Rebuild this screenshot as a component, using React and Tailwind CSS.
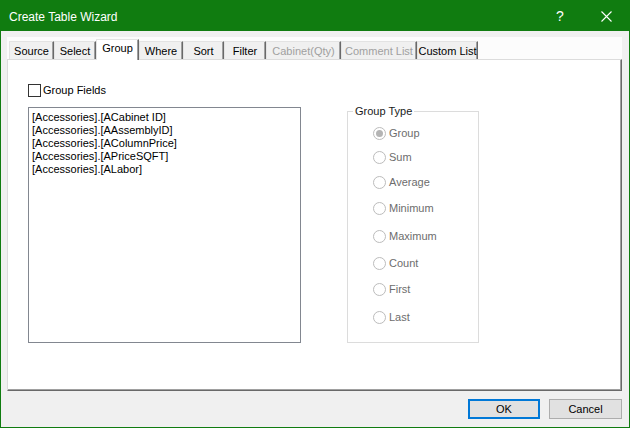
import React from "react";

const tabs = [
  { label: "Source", w: "w-[45px]" },
  { label: "Select", w: "w-[42px]" },
  { label: "Group", w: "w-[43px]", active: true },
  { label: "Where", w: "w-[44px]" },
  { label: "Sort", w: "w-[41px]" },
  { label: "Filter", w: "w-[42px]" },
  { label: "Cabinet(Qty)", w: "w-[75px]", disabled: true },
  { label: "Comment List", w: "w-[76px]", disabled: true },
  { label: "Custom List", w: "w-[61px]" },
];

const fields = [
  "[Accessories].[ACabinet ID]",
  "[Accessories].[AAssemblyID]",
  "[Accessories].[AColumnPrice]",
  "[Accessories].[APriceSQFT]",
  "[Accessories].[ALabor]",
];

const radios = [
  { label: "Group", mt: "mt-[15px]", checked: true },
  { label: "Sum", mt: "mt-[11px]" },
  { label: "Average", mt: "mt-[12px]" },
  { label: "Minimum", mt: "mt-[13px]" },
  { label: "Maximum", mt: "mt-[15px]" },
  { label: "Count", mt: "mt-[14px]" },
  { label: "First", mt: "mt-[13px]" },
  { label: "Last", mt: "mt-[15px]" },
];

function Tab({ t }) {
  if (t.active) {
    return (
      <div
        className={`${t.w} h-[21px] -mb-px relative z-10 bg-white border-t border-l border-[#e3e3e3] border-r border-r-[#696969] shadow-[inset_-1px_0_0_#a0a0a0] flex items-start justify-center pt-[2px] text-black`}
      >
        {t.label}
      </div>
    );
  }
  return (
    <div
      className={`${t.w} h-[18px] bg-[#f0f0f0] border-t border-l border-[#e3e3e3] border-r border-r-[#696969] shadow-[inset_-1px_0_0_#a0a0a0] flex items-center justify-center pt-px ${
        t.disabled ? "text-[#a0a0a0]" : "text-black"
      }`}
    >
      {t.label}
    </div>
  );
}

export default function App() {
  return (
    <div
      className="w-[630px] h-[428px] border border-[#107c10] bg-[#f0f0f0] flex flex-col text-[11px] leading-[13px] overflow-hidden"
      style={{ fontFamily: '"Liberation Sans", Arial, sans-serif' }}
    >
      {/* Title bar */}
      <div className="h-[30px] shrink-0 bg-[#107c10] flex items-center text-white">
        <div className="pl-[8px] text-[12px] leading-[14px] pt-px">Create Table Wizard</div>
        <div className="ml-auto flex h-full">
          <div className="w-[46px] h-full flex items-center justify-center text-[14px] pt-px">?</div>
          <div className="w-[46px] h-full flex items-center justify-center">
            <svg width="11" height="11" viewBox="0 0 11 11">
              <path d="M0.5 0.5 L10.5 10.5 M10.5 0.5 L0.5 10.5" stroke="white" strokeWidth="1.1" fill="none" />
            </svg>
          </div>
        </div>
      </div>

      {/* Body */}
      <div className="flex-1 flex flex-col pl-[6px] pr-[6px] pt-[6px]">
        {/* Tab control */}
        <div className="w-[615px] h-[354px] flex flex-col bg-white">
          <div className="h-[22px] shrink-0 flex items-end pl-[2px] bg-[#fcfcfc]">
            {tabs.map((t) => (
              <Tab key={t.label} t={t} />
            ))}
          </div>
          <div className="flex-1 bg-white border-t border-l border-[#dcdcdc] border-r border-b border-r-[#696969] border-b-[#696969] shadow-[inset_-1px_-1px_0_#a0a0a0]">
            <div className="flex items-start pl-[20px] pt-[24px]">
              {/* Left column */}
              <div className="w-[273px] flex flex-col">
                <div className="flex items-center h-[13px]">
                  <div className="w-[13px] h-[13px] border border-[#333333] bg-white" />
                  <span className="ml-[2px] text-black">Group Fields</span>
                </div>
                <div className="mt-[10px] h-[236px] border border-[#828790] bg-white pl-[3px] pt-[3px] text-black">
                  {fields.map((f) => (
                    <div key={f} className="h-[13px] leading-[13px]">
                      {f}
                    </div>
                  ))}
                </div>
              </div>

              {/* Group box */}
              <div className="ml-[46px] mt-[27px] w-[132px] h-[232px] border border-[#dcdcdc] relative flex flex-col">
                <div className="absolute left-[5px] -top-[7px] bg-white px-[2px] text-[#1a1a1a] leading-[13px]">
                  Group Type
                </div>
                {radios.map((r) => (
                  <div key={r.label} className={`${r.mt} flex items-center h-[13px] pl-[25px]`}>
                    <div className="w-[13px] h-[13px] rounded-full border border-[#bcbcbc] bg-white flex items-center justify-center">
                      {r.checked && <div className="w-[7px] h-[7px] rounded-full bg-[#b4b4b4]" />}
                    </div>
                    <span className="ml-[3px] text-[#6d6d6d]">{r.label}</span>
                  </div>
                ))}
              </div>
            </div>
          </div>
        </div>

        {/* Buttons */}
        <div className="mt-[8px] flex justify-end gap-[9px] pr-px">
          <button className="w-[72px] h-[20px] bg-[#e1e1e1] border-2 border-[#0078d7] text-black text-[11px] flex items-center justify-center">
            OK
          </button>
          <button className="w-[73px] h-[20px] bg-[#e1e1e1] border border-[#adadad] text-black text-[11px] flex items-center justify-center">
            Cancel
          </button>
        </div>
      </div>
    </div>
  );
}
